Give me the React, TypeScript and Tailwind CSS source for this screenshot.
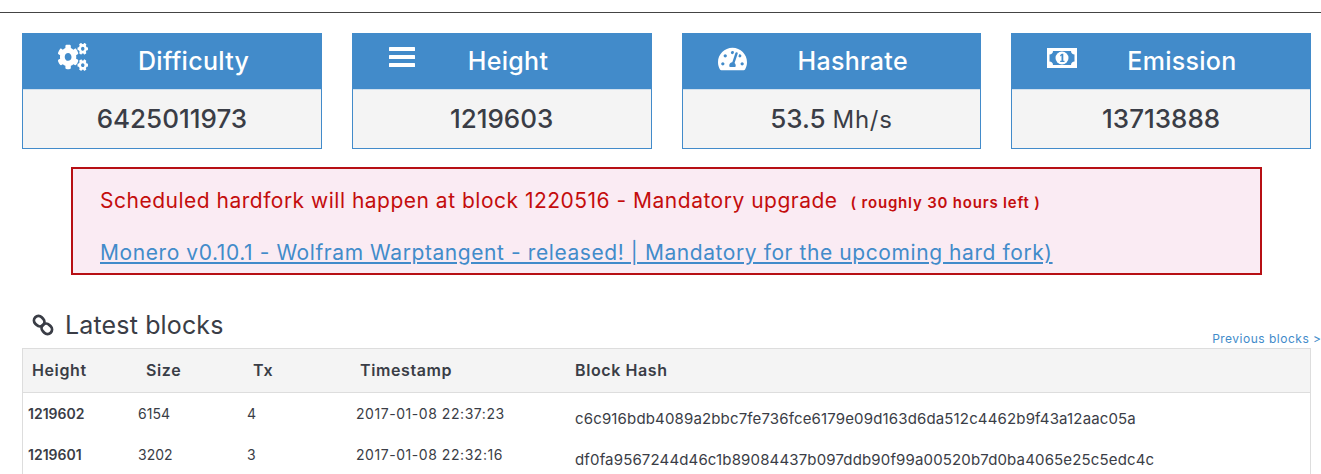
import { ReactNode } from "react";
import { FaCogs, FaTachometerAlt } from "react-icons/fa";

const font = { fontFamily: "Inter, 'Liberation Sans', sans-serif" };

function MoneyIcon() {
  return (
    <svg viewBox="0 0 30 20" className="mt-[5px] h-[20px] w-[30px]" fill="none">
      <path
        fillRule="evenodd"
        fill="#fff"
        d="M0 0h30v20H0zM6 3c0 2-1.500 3.500-3.500 3.500v7C4.500 13.500 6 15 6 17h18c0-2 1.500-3.500 3.500-3.500v-7C25.500 6.500 24 5 24 3z"
      />
      <circle cx="15" cy="10" r="6.500" fill="#fff" />
      <path fill="#428bca" d="M14.800 5.800h1.500v7h1.200v1.200h-4.300v-1.200h1.300V7.600l-1.300.8V7z" />
    </svg>
  );
}

function BarsIcon() {
  return (
    <svg viewBox="0 0 26 20" className="ml-[1px] mt-[4px] h-[20px] w-[26px]" fill="#fff">
      <rect y="0" width="26" height="4" rx="0.500" />
      <rect y="8" width="26" height="4" rx="0.500" />
      <rect y="16" width="26" height="4" rx="0.500" />
    </svg>
  );
}

function ChainIcon() {
  return (
    <svg viewBox="0 0 22 22" className="h-[22px] w-[22px]" fill="none" stroke="#3a3d46" strokeWidth="2.800">
      <rect x="1.700" y="2.700" width="11" height="9" rx="4.500" transform="rotate(45 7.200 7.200)" />
      <rect x="9.300" y="10.300" width="11" height="9" rx="4.500" transform="rotate(45 14.800 14.800)" />
    </svg>
  );
}

function StatCard({ icon, title, value }: { icon: ReactNode; title: string; value: ReactNode }) {
  return (
    <div className="border border-[#428bca]">
      <div className="flex h-[55px] items-start bg-[#428bca] text-white">
        <div className="flex w-[115px] shrink-0 pl-[35px] pt-[9px]">{icon}</div>
        <span className="pt-[11px] text-[25px] font-medium leading-[32px] tracking-[0.3px]">{title}</span>
      </div>
      <div className="flex h-[59px] items-center justify-center border-t border-t-[#cfe0ee] bg-[#f4f4f4] pb-[1px] text-[26px] font-medium text-[#3a3d46]">
        {value}
      </div>
    </div>
  );
}

const rows = [
  {
    height: "1219602",
    size: "6154",
    tx: "4",
    time: "2017-01-08 22:37:23",
    hash: "c6c916bdb4089a2bbc7fe736fce6179e09d163d6da512c4462b9f43a12aac05a",
  },
  {
    height: "1219601",
    size: "3202",
    tx: "3",
    time: "2017-01-08 22:32:16",
    hash: "df0fa9567244d46c1b89084437b097ddb90f99a00520b7d0ba4065e25c5edc4c",
  },
];

export default function App() {
  return (
    <div style={font} className="h-[474px] w-[1321px] overflow-hidden bg-white text-[#3a3d46]">
      <div className="mt-[12px] h-px bg-[#444]" />

      {/* stats */}
      <div className="ml-[22px] mr-[10px] mt-[20px] grid grid-cols-4 gap-x-[30px]">
        <StatCard
          icon={<FaCogs preserveAspectRatio="none" className="h-[28px] w-[30px] text-white" />}
          title="Difficulty"
          value="6425011973"
        />
        <StatCard icon={<BarsIcon />} title="Height" value="1219603" />
        <StatCard
          icon={<FaTachometerAlt className="mt-[3px] h-[26px] w-[29px] text-white" />}
          title="Hashrate"
          value={
            <span>
              53.5 <span className="text-[24px] font-normal tracking-[0.7px]">Mh/s</span>
            </span>
          }
        />
        <StatCard icon={<MoneyIcon />} title="Emission" value="13713888" />
      </div>

      {/* alert */}
      <div className="ml-[71px] mt-[18px] h-[108px] w-[1191px] border-2 border-[#b70f14] bg-[#faebf3] pl-[27px] pt-[17px]">
        <div className="flex items-baseline text-[#c40d0d]">
          <span className="text-[21px] leading-[30px] tracking-[0.5px]">
            Scheduled hardfork will happen at block 1220516 - Mandatory upgrade
          </span>
          <span className="ml-[13px] text-[15px] font-semibold tracking-[0.8px]">( roughly 30 hours left )</span>
        </div>
        <a className="mt-[22px] block text-[21px] leading-[30px] tracking-[0.58px] text-[#428bca] underline">
          Monero v0.10.1 - Wolfram Warptangent - released! | Mandatory for the upcoming hard fork)
        </a>
      </div>

      {/* blocks */}
      <div className="ml-[22px] mt-[31px] flex h-[42px] w-[1289px] items-start justify-between">
        <div className="flex items-center gap-[11px] pl-[10px] pt-[3px]">
          <ChainIcon />
          <span className="text-[25px] leading-[32px] tracking-[0.15px]">Latest blocks</span>
        </div>
        <a className="-mr-[19px] mt-[24px] whitespace-nowrap text-[12px] tracking-[0.5px] text-[#428bca]">
          Previous blocks &gt;&gt;
        </a>
      </div>
      <div className="ml-[22px] w-[1289px] border border-[#ddd] text-[14px]">
        <div className="grid h-[44px] grid-cols-[114px_107px_107px_215px_1fr] items-center border-b border-[#ddd] bg-[#f4f4f4] pb-[1px] pl-[9px] text-[16px] font-semibold tracking-[0.6px]">
          <span>Height</span>
          <span>Size</span>
          <span>Tx</span>
          <span>Timestamp</span>
          <span>Block Hash</span>
        </div>
        {rows.map((r) => (
          <div key={r.height} className="grid h-[41px] grid-cols-[110px_109px_109px_219px_1fr] pl-[5px] pt-[10px]">
            <span className="font-semibold">{r.height}</span>
            <span>{r.size}</span>
            <span>{r.tx}</span>
            <span className="tracking-[0.55px]">{r.time}</span>
            <span className="pt-[6px] text-[15px] leading-[20px] tracking-[0.15px]">{r.hash}</span>
          </div>
        ))}
      </div>
    </div>
  );
}
